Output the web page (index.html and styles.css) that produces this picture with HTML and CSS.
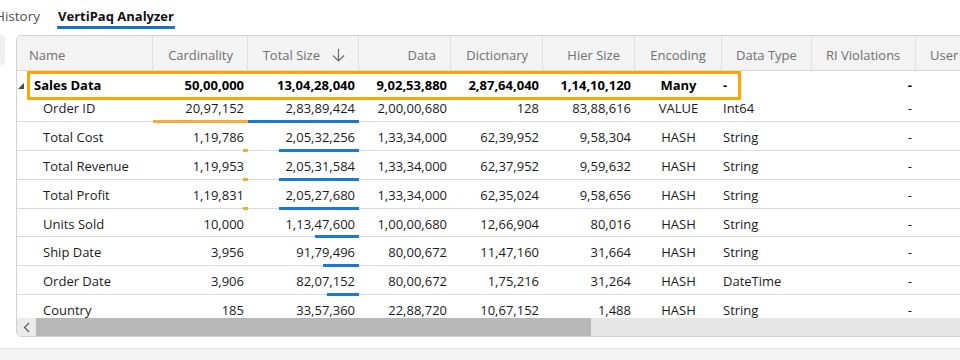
FILE: index.html
```html
<!DOCTYPE html>
<html lang="en">
<head>
<meta charset="utf-8">
<title>VertiPaq Analyzer</title>
<link rel="stylesheet" href="styles.css">
</head>
<body>
<div class="panel">
  <div class="tabs">
    <div class="tab tab-history">History</div>
    <div class="tab tab-active">VertiPaq Analyzer</div>
  </div>
  <div class="content">
    <div class="side"></div>
    <div class="grid">
      <div class="row head">
        <div class="c c-name">Name</div>
        <div class="c r">Cardinality</div>
        <div class="c r">Total Size<span class="sort"><svg width="13" height="14" viewBox="0 0 13 14"><path d="M6.5 1V13M1 7.5L6.5 13L12 7.5" fill="none" stroke="#6b6b6b" stroke-width="1.2"/></svg></span></div>
        <div class="c r">Data</div>
        <div class="c r">Dictionary</div>
        <div class="c r">Hier Size</div>
        <div class="c m">Encoding</div>
        <div class="c">Data Type</div>
        <div class="c">RI Violations</div>
        <div class="c">User</div>
        <div class="c">Rel Size</div>
      </div>
      <div class="body">
        <div class="row group">
          <div class="c c-name"><svg class="tri" width="6" height="6" viewBox="0 0 6 6"><polygon points="6,0 6,6 0,6" fill="#4a4a4a"/></svg>Sales Data</div>
          <div class="c r">50,00,000</div>
          <div class="c r">13,04,28,040</div>
          <div class="c r">9,02,53,880</div>
          <div class="c r">2,87,64,040</div>
          <div class="c r">1,14,10,120</div>
          <div class="c m">Many</div>
          <div class="c l">-</div>
          <div class="c r">-</div>
          <div class="c"></div>
          <div class="c"></div>
        </div>
        <div class="row">
          <div class="c c-name">Order ID</div>
          <div class="c r">20,97,152<i class="bar orange" style="width:95px"></i></div>
          <div class="c r">2,83,89,424<i class="bar blue" style="width:111px"></i></div>
          <div class="c r">2,00,00,680</div>
          <div class="c r">128</div>
          <div class="c r">83,88,616</div>
          <div class="c m">VALUE</div>
          <div class="c l">Int64</div>
          <div class="c r">-</div>
          <div class="c"></div>
          <div class="c"></div>
        </div>
        <div class="row">
          <div class="c c-name">Total Cost</div>
          <div class="c r">1,19,786<i class="bar orange" style="width:5.4px"></i></div>
          <div class="c r">2,05,32,256<i class="bar blue" style="width:80.3px"></i></div>
          <div class="c r">1,33,34,000</div>
          <div class="c r">62,39,952</div>
          <div class="c r">9,58,304</div>
          <div class="c m">HASH</div>
          <div class="c l">String</div>
          <div class="c r">-</div>
          <div class="c"></div>
          <div class="c"></div>
        </div>
        <div class="row">
          <div class="c c-name">Total Revenue</div>
          <div class="c r">1,19,953<i class="bar orange" style="width:5.4px"></i></div>
          <div class="c r">2,05,31,584<i class="bar blue" style="width:80.3px"></i></div>
          <div class="c r">1,33,34,000</div>
          <div class="c r">62,37,952</div>
          <div class="c r">9,59,632</div>
          <div class="c m">HASH</div>
          <div class="c l">String</div>
          <div class="c r">-</div>
          <div class="c"></div>
          <div class="c"></div>
        </div>
        <div class="row">
          <div class="c c-name">Total Profit</div>
          <div class="c r">1,19,831<i class="bar orange" style="width:5.4px"></i></div>
          <div class="c r">2,05,27,680<i class="bar blue" style="width:80.3px"></i></div>
          <div class="c r">1,33,34,000</div>
          <div class="c r">62,35,024</div>
          <div class="c r">9,58,656</div>
          <div class="c m">HASH</div>
          <div class="c l">String</div>
          <div class="c r">-</div>
          <div class="c"></div>
          <div class="c"></div>
        </div>
        <div class="row">
          <div class="c c-name">Units Sold</div>
          <div class="c r">10,000</div>
          <div class="c r">1,13,47,600<i class="bar blue" style="width:44.4px"></i></div>
          <div class="c r">1,00,00,680</div>
          <div class="c r">12,66,904</div>
          <div class="c r">80,016</div>
          <div class="c m">HASH</div>
          <div class="c l">String</div>
          <div class="c r">-</div>
          <div class="c"></div>
          <div class="c"></div>
        </div>
        <div class="row">
          <div class="c c-name">Ship Date</div>
          <div class="c r">3,956</div>
          <div class="c r">91,79,496<i class="bar blue" style="width:35.9px"></i></div>
          <div class="c r">80,00,672</div>
          <div class="c r">11,47,160</div>
          <div class="c r">31,664</div>
          <div class="c m">HASH</div>
          <div class="c l">String</div>
          <div class="c r">-</div>
          <div class="c"></div>
          <div class="c"></div>
        </div>
        <div class="row">
          <div class="c c-name">Order Date</div>
          <div class="c r">3,906</div>
          <div class="c r">82,07,152<i class="bar blue" style="width:32.1px"></i></div>
          <div class="c r">80,00,672</div>
          <div class="c r">1,75,216</div>
          <div class="c r">31,264</div>
          <div class="c m">HASH</div>
          <div class="c l">DateTime</div>
          <div class="c r">-</div>
          <div class="c"></div>
          <div class="c"></div>
        </div>
        <div class="row">
          <div class="c c-name">Country</div>
          <div class="c r">185</div>
          <div class="c r">33,57,360<i class="bar blue" style="width:13.1px"></i></div>
          <div class="c r">22,88,720</div>
          <div class="c r">10,67,152</div>
          <div class="c r">1,488</div>
          <div class="c m">HASH</div>
          <div class="c l">String</div>
          <div class="c r">-</div>
          <div class="c"></div>
          <div class="c"></div>
        </div>
      </div>
      <div class="hscroll">
        <div class="sb-btn"><svg width="7" height="11" viewBox="0 0 7 11"><path d="M6 1L1.5 5.5L6 10" fill="none" stroke="#555" stroke-width="1.1"/></svg></div>
        <div class="sb-thumb"></div>
        <div class="sb-track"></div>
      </div>
      <div class="highlight"></div>
    </div>
  </div>
</div>
</body>
</html>
```

FILE: styles.css
```css
* { box-sizing: border-box; }

html, body {
  margin: 0;
  padding: 0;
}

body {
  background: #f3f3f3;
  font-family: "Open Sans", "Noto Sans", sans-serif;
  font-size: 13px;
  color: #1b1b1b;
  overflow: hidden;
  width: 960px;
  height: 360px;
}

.panel {
  background: #ffffff;
  height: 349px;
  border-bottom: 1px solid #e2e2e2;
  overflow: hidden;
}

/* Tabs */
.tabs {
  display: flex;
  gap: 17px;
  height: 35px;
  padding-top: 6px;
  margin-left: -5px;
}

.tab {
  height: 23px;
  line-height: 20px;
  font-size: 13.5px;
  color: #505050;
  white-space: nowrap;
}

.tab-active {
  font-size: 13px;
  font-weight: 700;
  color: #111;
  border-bottom: 3px solid #1673c8;
  border-radius: 0 0 1px 1px;
  padding: 0 1px;
}

/* Content */
.content {
  display: flex;
  align-items: flex-start;
}

.side {
  width: 5px;
  height: 30px;
  background: #efefef;
  border-radius: 0 4px 4px 0;
  flex: none;
}

.grid {
  position: relative;
  margin-left: 11px;
  width: 1030px;
  flex: none;
  border: 1px solid #d2d2d2;
  border-radius: 5px;
  overflow: hidden;
  background: #fff;
  display: flex;
  flex-direction: column;
}

.row {
  display: grid;
  grid-template-columns: 136px 95px 111px 92px 92px 92px 87px 90px 104px 100px 130px;
  height: 28.8px;
  border-bottom: 1px solid #dadada;
  align-items: center;
}

.c {
  position: relative;
  padding: 2px 4px 0;
  white-space: nowrap;
  height: 100%;
  display: flex;
  align-items: center;
}

.c.r { justify-content: flex-end; }
.c.m { justify-content: center; }
.c.l { padding-left: 1px; }

.c-name { padding-left: 26px; }

/* Header */
.head {
  height: 35px;
  background: #f3f3f3;
  border-bottom: 1px solid #d9d9d9;
  color: #707070;
}

.head .c {
  padding: 3px 14px 0;
  border-right: 1px solid #e0e0e0;
}

.head .c-name { padding-left: 12px; }

.head .c.m { padding: 3px 0 0; }

.sort {
  display: inline-flex;
  margin-left: 12px;
  margin-right: -1px;
}

/* Body */
.body {
  height: 247px;
  overflow: hidden;
}

.group {
  height: 22.5px;
  font-weight: 700;
  color: #000;
  border-bottom: none;
  padding-top: 3px;
}

.group .c-name { padding-left: 1px; }

.tri {
  margin-right: 10px;
  margin-top: 2px;
}

.bar {
  position: absolute;
  right: 0;
  bottom: -2px;
  height: 3px;
}

.bar.orange { background: #f7ab3a; }
.bar.blue { background: #1b79d3; }

/* Horizontal scrollbar */
.hscroll {
  display: flex;
  height: 18px;
  background: #e6e6e6;
}

.sb-btn {
  width: 19px;
  background: #ebebeb;
  display: flex;
  align-items: center;
  justify-content: center;
}

.sb-thumb {
  width: 555px;
  background: #b8b8b8;
}

.sb-track { flex: 1; }

/* Annotation overlay */
.highlight {
  position: absolute;
  left: 10px;
  top: 35px;
  width: 714px;
  height: 29px;
  border: 3.5px solid #ffa500;
  pointer-events: none;
}
```
